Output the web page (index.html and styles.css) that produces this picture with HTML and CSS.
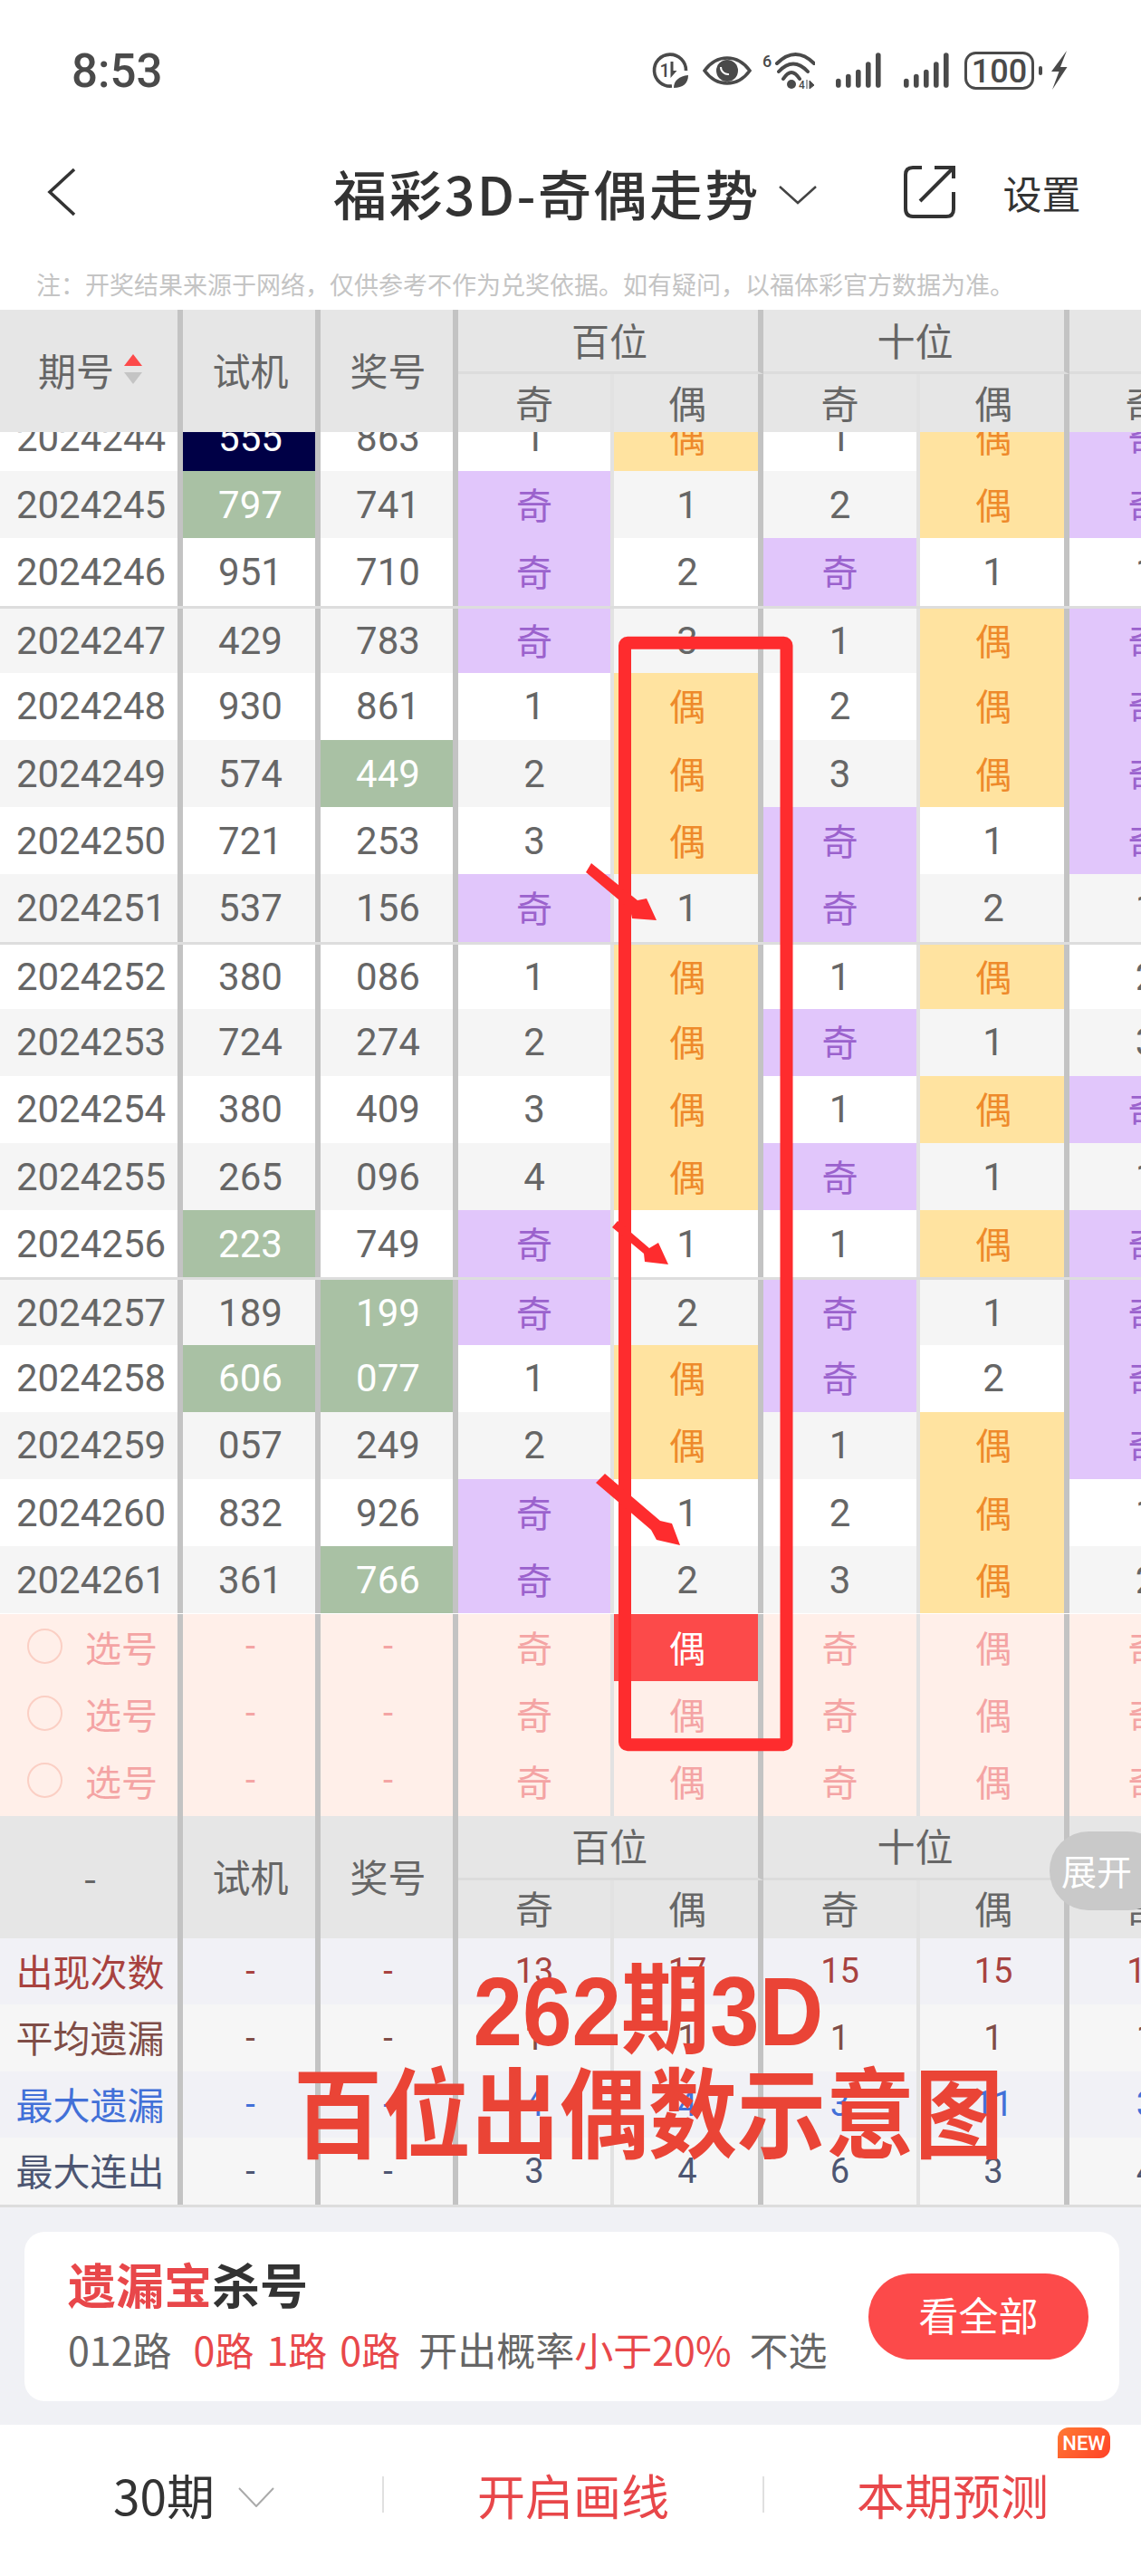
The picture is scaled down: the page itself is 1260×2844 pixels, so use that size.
FILE: index.html
```html
<!DOCTYPE html>
<html lang="zh-CN">

<head>
    <meta charset="UTF-8">
    <meta name="viewport" content="width=device-width, initial-scale=1.0">
    <title>福彩3D-奇偶走势</title>
    <link rel="stylesheet" href="styles.css">
</head>

<body>
    <div class="app">
        <div class="status-bar">
            <span class="time">8:53</span>
            <div class="status-icons">
                <svg class="ic-speed" width="40" height="40" viewBox="0 0 40 40">
                    <path d="M22 37A17.5 17.5 0 1 1 37.5 20" fill="none" stroke="#4a4a4a" stroke-width="3.6" />
                    <text x="8.5" y="27" class="ic-text" font-size="20">1</text>
                    <path d="M20.5 10h3v10h4l-7 8z" fill="#4a4a4a" />
                    <path d="M24 39C24 31 30 26 40 25C40 34 34 39 24 39z" fill="#4a4a4a" />
                </svg>
                <svg class="ic-eye" width="54" height="32" viewBox="0 0 54 32">
                    <path d="M2 16C10 5 18 2 27 2C36 2 44 5 52 16C44 27 36 30 27 30C18 30 10 27 2 16z" fill="none" stroke="#4a4a4a" stroke-width="3.6" />
                    <circle cx="27" cy="16" r="12" fill="#4a4a4a" />
                    <path d="M20 12a8 8 0 0 0 9 8" fill="none" stroke="#fff" stroke-width="2" />
                </svg>
                <svg class="ic-wifi" width="58" height="43" viewBox="0 0 58 43">
                    <text x="0" y="17" class="ic-text" font-size="18">6</text>
                    <path d="M16 13Q36.500 -7 57 13M18 22Q34 5 50 22M23 30Q32 16 41 30" fill="none" stroke="#4a4a4a" stroke-width="4" stroke-linecap="round" />
                    <circle cx="32" cy="36" r="5" fill="#4a4a4a" />
                    <text x="40" y="41" class="ic-text" font-size="12">4</text>
                    <path d="M49 31v10M52 41v-9l5 5z" fill="#4a4a4a" stroke="#4a4a4a" stroke-width="1" />
                </svg>
                <svg class="ic-signal" width="50" height="40" viewBox="0 0 50 40">
                    <rect x="0" y="28.700" width="5.600" height="10" rx="2.800" />
                    <rect x="11" y="23.700" width="5.600" height="15" rx="2.800" />
                    <rect x="22" y="18.700" width="5.600" height="20" rx="2.800" />
                    <rect x="33" y="10.300" width="5.600" height="28.400" rx="2.800" />
                    <rect x="44" y="0.300" width="5.600" height="38.400" rx="2.800" />
                </svg>
                <svg class="ic-signal second" width="50" height="40" viewBox="0 0 50 40">
                    <rect x="0" y="28.700" width="5.600" height="10" rx="2.800" />
                    <rect x="11" y="23.700" width="5.600" height="15" rx="2.800" />
                    <rect x="22" y="18.700" width="5.600" height="20" rx="2.800" />
                    <rect x="33" y="10.300" width="5.600" height="28.400" rx="2.800" />
                    <rect x="44" y="0.300" width="5.600" height="38.400" rx="2.800" />
                </svg>
                <svg class="ic-battery" width="86" height="42" viewBox="0 0 86 42">
                    <rect x="1.500" y="1.500" width="74" height="39" rx="11" fill="none" stroke="#4a4a4a" stroke-width="3" />
                    <text x="38.500" y="34" text-anchor="middle" class="ic-text" font-size="36">100</text>
                    <rect x="82" y="16" width="4" height="10" rx="2" fill="#4a4a4a" />
                </svg>
                <svg class="ic-bolt" width="20" height="44" viewBox="0 0 20 44">
                    <path d="M18 0L1 23H9.500L2 43L18.500 18H11z" fill="#4a4a4a" />
                </svg>
            </div>
        </div>

        <div class="nav">
            <svg class="back" width="32" height="54" viewBox="0 0 32 54">
                <path d="M30 2L3 27L30 52" fill="none" stroke="#333" stroke-width="3.600" />
            </svg>
            <h1 class="nav-title">福彩3D-奇偶走势</h1>
            <svg class="title-arrow" width="42" height="22" viewBox="0 0 42 22">
                <path d="M1 2L21 20L41 2" fill="none" stroke="#444" stroke-width="2.500" />
            </svg>
            <svg class="share" width="60" height="60" viewBox="0 0 60 60">
                <path d="M22 3H12Q4 3 4 11V48Q4 57 12 57H49Q57 57 57 49V30" fill="none" stroke="#333" stroke-width="4" />
                <path d="M20 40L56 4M36 3H57V15" fill="none" stroke="#333" stroke-width="4" />
            </svg>
            <span class="settings">设置</span>
        </div>

        <div class="note">注：开奖结果来源于网络，仅供参考不作为兑奖依据。如有疑问，以福体彩官方数据为准。</div>

        <div class="head">
            <div class="th tall bar sort-cell">期号
                <span class="sort">
                    <i class="up"></i>
                    <i class="down"></i>
                </span>
            </div>
            <div class="th tall bar">试机</div>
            <div class="th tall bar">奖号</div>
            <div class="th wide top bar">百位</div>
            <div class="th wide top bar">十位</div>
            <div class="th wide top">个位</div>
            <div class="th thin">奇</div>
            <div class="th bar">偶</div>
            <div class="th thin">奇</div>
            <div class="th bar">偶</div>
            <div class="th thin">奇</div>
            <div class="th">偶</div>
        </div>

        <div class="tbody">
            <div class="row first">
                <div class="td bar">2024244</div><div class="td bar navy">555</div><div class="td bar">863</div>
                <div class="td thin">1</div><div class="td bar even">偶</div><div class="td thin">1</div><div class="td bar even">偶</div><div class="td odd">奇</div>
            </div>
            <div class="row alt">
                <div class="td bar">2024245</div><div class="td bar green">797</div><div class="td bar">741</div>
                <div class="td thin odd">奇</div><div class="td bar">1</div><div class="td thin">2</div><div class="td bar even">偶</div><div class="td odd">奇</div>
            </div>
            <div class="row">
                <div class="td bar">2024246</div><div class="td bar">951</div><div class="td bar">710</div>
                <div class="td thin odd">奇</div><div class="td bar">2</div><div class="td thin odd">奇</div><div class="td bar">1</div><div class="td">1</div>
            </div>
            <div class="row alt group">
                <div class="td bar">2024247</div><div class="td bar">429</div><div class="td bar">783</div>
                <div class="td thin odd">奇</div><div class="td bar">3</div><div class="td thin">1</div><div class="td bar even">偶</div><div class="td odd">奇</div>
            </div>
            <div class="row">
                <div class="td bar">2024248</div><div class="td bar">930</div><div class="td bar">861</div>
                <div class="td thin">1</div><div class="td bar even">偶</div><div class="td thin">2</div><div class="td bar even">偶</div><div class="td odd">奇</div>
            </div>
            <div class="row alt">
                <div class="td bar">2024249</div><div class="td bar">574</div><div class="td bar green">449</div>
                <div class="td thin">2</div><div class="td bar even">偶</div><div class="td thin">3</div><div class="td bar even">偶</div><div class="td odd">奇</div>
            </div>
            <div class="row">
                <div class="td bar">2024250</div><div class="td bar">721</div><div class="td bar">253</div>
                <div class="td thin">3</div><div class="td bar even">偶</div><div class="td thin odd">奇</div><div class="td bar">1</div><div class="td odd">奇</div>
            </div>
            <div class="row alt">
                <div class="td bar">2024251</div><div class="td bar">537</div><div class="td bar">156</div>
                <div class="td thin odd">奇</div><div class="td bar">1</div><div class="td thin odd">奇</div><div class="td bar">2</div><div class="td">1</div>
            </div>
            <div class="row group">
                <div class="td bar">2024252</div><div class="td bar">380</div><div class="td bar">086</div>
                <div class="td thin">1</div><div class="td bar even">偶</div><div class="td thin">1</div><div class="td bar even">偶</div><div class="td">2</div>
            </div>
            <div class="row alt">
                <div class="td bar">2024253</div><div class="td bar">724</div><div class="td bar">274</div>
                <div class="td thin">2</div><div class="td bar even">偶</div><div class="td thin odd">奇</div><div class="td bar">1</div><div class="td">3</div>
            </div>
            <div class="row">
                <div class="td bar">2024254</div><div class="td bar">380</div><div class="td bar">409</div>
                <div class="td thin">3</div><div class="td bar even">偶</div><div class="td thin">1</div><div class="td bar even">偶</div><div class="td odd">奇</div>
            </div>
            <div class="row alt">
                <div class="td bar">2024255</div><div class="td bar">265</div><div class="td bar">096</div>
                <div class="td thin">4</div><div class="td bar even">偶</div><div class="td thin odd">奇</div><div class="td bar">1</div><div class="td">1</div>
            </div>
            <div class="row">
                <div class="td bar">2024256</div><div class="td bar green">223</div><div class="td bar">749</div>
                <div class="td thin odd">奇</div><div class="td bar">1</div><div class="td thin">1</div><div class="td bar even">偶</div><div class="td odd">奇</div>
            </div>
            <div class="row alt group">
                <div class="td bar">2024257</div><div class="td bar">189</div><div class="td bar green">199</div>
                <div class="td thin odd">奇</div><div class="td bar">2</div><div class="td thin odd">奇</div><div class="td bar">1</div><div class="td odd">奇</div>
            </div>
            <div class="row">
                <div class="td bar">2024258</div><div class="td bar green">606</div><div class="td bar green">077</div>
                <div class="td thin">1</div><div class="td bar even">偶</div><div class="td thin odd">奇</div><div class="td bar">2</div><div class="td odd">奇</div>
            </div>
            <div class="row alt">
                <div class="td bar">2024259</div><div class="td bar">057</div><div class="td bar">249</div>
                <div class="td thin">2</div><div class="td bar even">偶</div><div class="td thin">1</div><div class="td bar even">偶</div><div class="td odd">奇</div>
            </div>
            <div class="row">
                <div class="td bar">2024260</div><div class="td bar">832</div><div class="td bar">926</div>
                <div class="td thin odd">奇</div><div class="td bar">1</div><div class="td thin">2</div><div class="td bar even">偶</div><div class="td">1</div>
            </div>
            <div class="row alt">
                <div class="td bar">2024261</div><div class="td bar">361</div><div class="td bar green">766</div>
                <div class="td thin odd">奇</div><div class="td bar">2</div><div class="td thin">3</div><div class="td bar even">偶</div><div class="td">2</div>
            </div>
        </div>

        <div class="picks">
            <div class="row pick">
                <div class="td bar pick-label"><i class="radio"></i>选号</div><div class="td bar">-</div><div class="td bar">-</div>
                <div class="td thin">奇</div><div class="td bar picked">偶</div><div class="td thin">奇</div><div class="td bar">偶</div><div class="td">奇</div>
            </div>
            <div class="row pick">
                <div class="td bar pick-label"><i class="radio"></i>选号</div><div class="td bar">-</div><div class="td bar">-</div>
                <div class="td thin">奇</div><div class="td bar">偶</div><div class="td thin">奇</div><div class="td bar">偶</div><div class="td">奇</div>
            </div>
            <div class="row pick">
                <div class="td bar pick-label"><i class="radio"></i>选号</div><div class="td bar">-</div><div class="td bar">-</div>
                <div class="td thin">奇</div><div class="td bar">偶</div><div class="td thin">奇</div><div class="td bar">偶</div><div class="td">奇</div>
            </div>
        </div>

        <div class="head">
            <div class="th tall bar">-</div>
            <div class="th tall bar">试机</div>
            <div class="th tall bar">奖号</div>
            <div class="th wide top bar">百位</div>
            <div class="th wide top bar">十位</div>
            <div class="th wide top">个位</div>
            <div class="th thin">奇</div>
            <div class="th bar">偶</div>
            <div class="th thin">奇</div>
            <div class="th bar">偶</div>
            <div class="th thin">奇</div>
            <div class="th">偶</div>
        </div>

        <div class="stats">
            <div class="row stat s-count">
                <div class="td bar label">出现次数</div><div class="td bar">-</div><div class="td bar">-</div>
                <div class="td thin">13</div><div class="td bar">17</div><div class="td thin">15</div><div class="td bar">15</div><div class="td">15</div>
            </div>
            <div class="row stat s-avg">
                <div class="td bar label">平均遗漏</div><div class="td bar">-</div><div class="td bar">-</div>
                <div class="td thin">1</div><div class="td bar">1</div><div class="td thin">1</div><div class="td bar">1</div><div class="td">1</div>
            </div>
            <div class="row stat s-max">
                <div class="td bar label">最大遗漏</div><div class="td bar">-</div><div class="td bar">-</div>
                <div class="td thin">4</div><div class="td bar">4</div><div class="td thin">3</div><div class="td bar">11</div><div class="td">3</div>
            </div>
            <div class="row stat s-run">
                <div class="td bar label">最大连出</div><div class="td bar">-</div><div class="td bar">-</div>
                <div class="td thin">3</div><div class="td bar">4</div><div class="td thin">6</div><div class="td bar">3</div><div class="td">4</div>
            </div>
        </div>

        <div class="promo-wrap">
            <div class="promo">
                <div class="promo-text">
                    <div class="promo-title"><span class="red">遗漏宝</span>杀号</div>
                    <div class="promo-line">
                        <span>012路</span>
                        <span class="red gap-a">0路</span>
                        <span class="red gap-b">1路</span>
                        <span class="red gap-b">0路</span>
                        <span class="gap-c">开出概率</span><span class="red">小于20%</span>
                        <span class="gap-c">不选</span>
                    </div>
                </div>
                <div class="promo-btn">看全部</div>
            </div>
        </div>

        <div class="tabs">
            <div class="tab period">30期
                <svg class="tab-arrow" width="40" height="22" viewBox="0 0 40 22">
                    <path d="M1 1L20 21L39 1" fill="none" stroke="#aaa" stroke-width="2" />
                </svg>
            </div>
            <div class="tab red divided">开启画线</div>
            <div class="tab red divided">
                <span class="tab-new">本期预测<b class="new-badge">NEW</b></span>
            </div>
        </div>

        <!-- 標註：紅框、箭頭 -->
        <svg class="marks" width="1260" height="2844" viewBox="0 0 1260 2844">
            <rect x="690" y="709.700" width="178.500" height="1216.500" rx="3" fill="none" stroke="#fe2c2e" stroke-width="14" />
            <polygon points="653,953 704,994 714,992 725,1016 698,1014 696,1004 647,963" fill="#fe2c2e" />
            <polygon points="682,1348 717,1378 727,1372 738,1396 712,1393 711,1384 676,1355" fill="#fe2c2e" />
            <polygon points="668,1627 729,1679 742,1682 751,1706 725,1700 719,1689 658,1637" fill="#fe2c2e" />
        </svg>

        <div class="expand">展开</div>

        <div class="caption">
            <div>262期3D</div>
            <div>百位出偶数示意图</div>
        </div>
    </div>
</body>

</html>
```

FILE: styles.css
```css
* {
    box-sizing: border-box;
    margin: 0;
    padding: 0;
}

body {
    font-family: Roboto, 'Noto Sans CJK SC', sans-serif;
    background: #fff;
}

.app {
    position: relative;
    display: flex;
    flex-direction: column;
    width: 1260px;
    height: 2844px;
    overflow: hidden;
    background: #fff;
}

/* status bar */
.status-bar {
    display: flex;
    align-items: center;
    flex: none;
    height: 156px;
    padding: 0 80px 0 79px;
}

.time {
    font-size: 51px;
    font-weight: 500;
    color: #4a4a4a;
}

.status-icons {
    display: flex;
    align-items: center;
    margin-left: auto;
}

.ic-text {
    font-family: Roboto, sans-serif;
    font-weight: 500;
    fill: #4a4a4a;
}

.ic-signal rect {
    fill: #4a4a4a;
}

.ic-eye {
    margin-left: 16px;
}

.ic-wifi {
    margin-left: 12px;
}

.ic-signal {
    margin-left: 23px;
}

.ic-signal.second {
    margin-left: 25px;
}

.ic-battery {
    margin-left: 17px;
}

.ic-bolt {
    margin-left: 9px;
}

/* nav */
.nav {
    display: flex;
    align-items: center;
    flex: none;
    height: 112px;
    padding-left: 52px;
}

.nav-title {
    margin-left: 284px;
    font-family: 'Noto Sans CJK SC', sans-serif;
    font-size: 59px;
    font-weight: 500;
    letter-spacing: 2.4px;
    color: #333;
    white-space: nowrap;
}

.title-arrow {
    margin: 6px 0 0 20px;
}

.share {
    margin-left: 94px;
}

.settings {
    margin-left: 52px;
    font-family: 'Noto Sans CJK SC', sans-serif;
    font-size: 43px;
    color: #333;
}

.note {
    flex: none;
    height: 74px;
    padding: 28px 0 0 40px;
    font-family: 'Noto Sans CJK SC', sans-serif;
    font-size: 27px;
    line-height: 36px;
    color: #c4c4c4;
    white-space: nowrap;
}

/* table */
.head {
    display: grid;
    flex: none;
    grid-template-columns: 202px 152px 152px 172px 165px 173px 165px 169px 169px;
    grid-template-rows: 71px 64px;
    font-family: 'Noto Sans CJK SC', sans-serif;
    background: #e6e6e6;
}

.th {
    display: flex;
    align-items: center;
    justify-content: center;
    padding-bottom: 4px;
    font-size: 42px;
    color: #666;
}

.th.tall {
    grid-row: span 2;
}

.th.wide {
    grid-column: span 2;
}

.th.top {
    border-bottom: 3px solid #dcdcdc;
}

.bar {
    padding-left: 3px;
    border-right: 6px solid #c3c3c3;
}

.thin {
    border-right: 4px solid #e2e2e2;
}

.sort-cell {
    justify-content: flex-start;
    padding-left: 42px;
}

.sort {
    display: flex;
    flex-direction: column;
    gap: 7px;
    margin-left: 11px;
}

.sort i {
    display: block;
    width: 0;
    height: 0;
    border-left: 10px solid transparent;
    border-right: 10px solid transparent;
}

.sort .up {
    border-bottom: 13px solid #fc4a4a;
}

.sort .down {
    border-top: 13px solid #c4c4c4;
}

.tbody {
    flex: none;
    height: 1305px;
    overflow: hidden;
}

.row {
    display: grid;
    grid-template-columns: 202px 152px 152px 172px 165px 173px 165px 169px;
    height: 74.2px;
    background: #fff;
}

.row.first {
    margin-top: -31px;
}

.row.alt {
    background: #f5f5f5;
}

.row.group {
    border-top: 3px solid #dddddd;
}

.td {
    display: flex;
    align-items: center;
    justify-content: center;
    font-size: 42px;
    color: #666;
    font-family: Roboto, 'Noto Sans CJK SC', sans-serif;
}

.td:first-child {
    padding-left: 5px;
}

.td.odd {
    padding-bottom: 3px;
    background: #e1c6fb;
    color: #9b62cd;
    font-size: 40px;
}

.td.even {
    padding-bottom: 3px;
    background: #ffe3a0;
    color: #ee8a2b;
    font-size: 40px;
}

.td.green {
    background: #a9c1a4;
    color: #fff;
}

.td.navy {
    background: #000046;
    color: #fff;
}

/* pick rows */
.picks {
    flex: none;
}

.row.pick {
    background: #ffefe9;
}

.pick .td {
    padding-bottom: 3px;
    font-size: 40px;
    color: #f4a4a4;
}

.pick .td.picked {
    background: #fc4a4a;
    color: #fff;
}

.pick .pick-label {
    justify-content: flex-start;
    padding-left: 30px;
}

.radio {
    display: block;
    width: 39px;
    height: 39px;
    margin-right: 25px;
    border: 2px solid #fbcfc4;
    border-radius: 50%;
}

/* stats */
.stats {
    flex: none;
    border-bottom: 3px solid #dddddd;
}

.row.stat {
    height: 73.5px;
    background: #f1f1f6;
}

.row.stat:nth-child(even) {
    background: #f6f6f6;
}

.stat .td {
    font-size: 38px;
}

.stat .label {
    padding: 0 0 3px 3px;
    font-size: 41px;
}

.s-count .td {
    color: #a8423f;
}

.s-avg .td {
    color: #7f4d47;
}

.s-max .td {
    color: #4270d8;
}

.s-run .td {
    color: #4d5672;
}

/* promo */
.promo-wrap {
    flex: none;
    height: 240px;
    padding: 27px 24px 27px 27px;
    background: #f0f1f5;
}

.promo {
    display: flex;
    align-items: center;
    height: 187px;
    padding: 0 34px 0 48px;
    background: #fff;
    border-radius: 22px;
    font-family: 'Noto Sans CJK SC', sans-serif;
}

.red {
    color: #e8474a;
}

.promo-text {
    padding-bottom: 5px;
}

.promo-title {
    font-size: 53px;
    font-weight: 700;
    line-height: 60px;
    color: #333;
}

.promo-title .red {
    font-weight: 700;
}

.promo-line {
    display: flex;
    margin-top: 16px;
    font-size: 43px;
    line-height: 52px;
    color: #666;
    white-space: nowrap;
}

.gap-a {
    margin-left: 24px;
}

.gap-b {
    margin-left: 14px;
}

.gap-c {
    margin-left: 20px;
}

.promo-btn {
    display: flex;
    align-items: center;
    justify-content: center;
    width: 243px;
    height: 95px;
    margin-left: auto;
    padding-bottom: 4px;
    background: #fc4a4a;
    border-radius: 48px;
    font-size: 44px;
    color: #fff;
}

/* bottom tabs */
.tabs {
    display: grid;
    flex: 1;
    grid-template-columns: 422px 420px 418px;
    align-items: center;
    padding-bottom: 12px;
    font-family: 'Noto Sans CJK SC', sans-serif;
}

.tab {
    display: flex;
    align-items: center;
    justify-content: center;
    font-size: 53px;
    color: #333;
}

.tab.period {
    padding-left: 6px;
}

.tab.red {
    color: #e8474a;
}

.tab.divided {
    border-left: 2px solid #e0e0e0;
    height: 40px;
}

.tab-arrow {
    margin: 6px 0 0 26px;
}

.tab-new {
    position: relative;
}

.new-badge {
    position: absolute;
    top: -36px;
    left: 222px;
    display: flex;
    align-items: center;
    justify-content: center;
    width: 58px;
    height: 34px;
    background: linear-gradient(135deg, #ff7a33, #ff4228);
    border-radius: 12px 12px 12px 0;
    font-family: Roboto, sans-serif;
    font-size: 22px;
    font-weight: 500;
    color: #fff;
}

/* overlays */
.marks {
    position: absolute;
    left: 0;
    top: 0;
    pointer-events: none;
}

.expand {
    position: absolute;
    top: 2022px;
    left: 1159px;
    display: flex;
    align-items: center;
    justify-content: flex-start;
    width: 130px;
    height: 87px;
    padding: 0 0 3px 13px;
    background: #c9c9c9;
    border-radius: 43px;
    font-family: 'Noto Sans CJK SC', sans-serif;
    font-size: 39px;
    color: #fff;
}

.caption {
    position: absolute;
    top: 2174px;
    left: 0;
    width: 1432px;
    font-family: 'Liberation Sans', 'Noto Sans CJK SC', sans-serif;
    font-size: 98px;
    font-weight: 700;
    line-height: 105px;
    text-align: center;
    color: #ea4436;
    transform: scaleY(1.1);
}
```
